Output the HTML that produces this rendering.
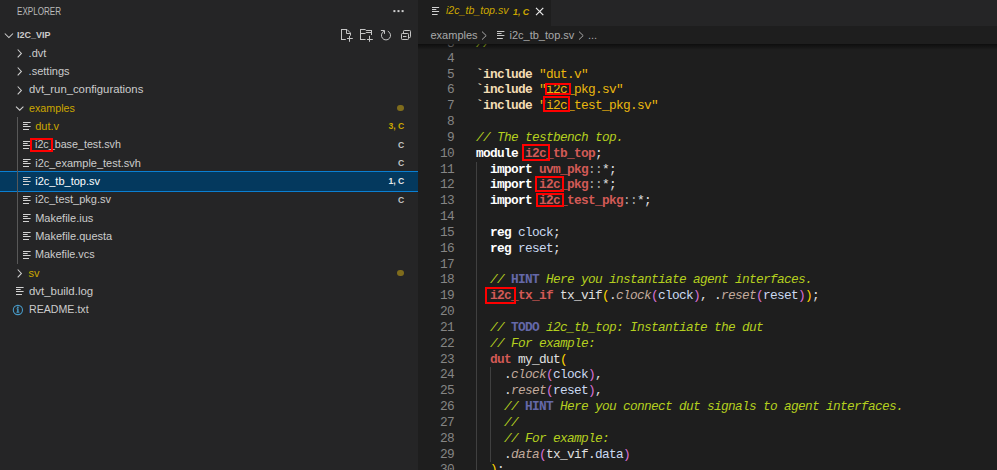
<!DOCTYPE html><html><head><meta charset="utf-8"><style>
*{margin:0;padding:0;box-sizing:border-box}
html,body{width:997px;height:470px;overflow:hidden;background:#1e1e1e}
body{position:relative;font-family:"Liberation Sans",sans-serif;-webkit-font-smoothing:subpixel-antialiased}
.a{position:absolute;white-space:pre}
.s{font-family:"Liberation Sans",sans-serif}
.m{font-family:"Liberation Mono",monospace;font-size:12.8px;letter-spacing:-0.681px;line-height:15.833px;height:15.833px}
.lab{font-size:11px;line-height:18px;color:#cccccc}
.dec{font-size:8.6px;font-weight:700;line-height:18px;color:#c5c5c5}
.ln{color:#858585;text-align:right;width:40px}
.kw{color:#ffffff;font-weight:700}
.pp{color:#f3dcb4;font-weight:700}
.str{color:#ebb80e}
.cm{color:#b4cf1e;font-style:italic}
.tg{color:#6468a8;font-weight:700;font-style:normal}
.id{color:#d25a56;font-weight:700}
.df{color:#e0e0e0}
.var{color:#cad9f2}
.po{color:#c2aa9c;font-style:italic}
.b1{color:#ffd700}
.b2{color:#da70d6}
.op{color:#a8a8a8}
.box{position:absolute;border:2.3px solid #ff0000}
</style></head><body><div class="a" style="left:0;top:0;width:418px;height:470px;background:#252526"></div>
<div class="a s" style="left:17px;top:6px;font-size:10px;line-height:12px;color:#bbbbbb;transform:scaleX(0.81);transform-origin:0 0">EXPLORER</div>
<svg class="a" style="left:388px;top:4px" width="20" height="14" viewBox="388 4 20 14"><rect x="393.4" y="10.1" width="2" height="2" fill="#d0d0d0"/><rect x="397.5" y="10.1" width="2" height="2" fill="#d0d0d0"/><rect x="401.6" y="10.1" width="2" height="2" fill="#d0d0d0"/></svg>
<svg class="a" style="left:3px;top:31px" width="12" height="9" viewBox="0 0 12 9"><path d="M1.8 2.5 L5.9 6.6 L10 2.5" fill="none" stroke="#d0d0d0" stroke-width="1.05"/></svg>
<div class="a s" style="left:17px;top:29px;font-size:9px;font-weight:700;line-height:12px;color:#cccccc;transform:scaleX(0.995);transform-origin:0 0">I2C_VIP</div>
<svg class="a" style="left:0;top:0" width="418" height="44" viewBox="0 0 418 44">
<path fill="none" stroke="#c5c5c5" stroke-width="1" d="M341.5 29 V40 M341 39.5 H345.8 M341 29.5 H347 L350.5 33 V35.6 M346.5 29.5 V33.5 H350.5"/>
<path fill="none" stroke="#c5c5c5" stroke-width="1" d="M347 38.5 H352.8 M349.5 35.8 V41.8"/>
<path fill="none" stroke="#c5c5c5" stroke-width="1" d="M360.5 29 V40 M360 29.5 H365.3 L366.1 30.5 H372 M371.5 30 V35 M360 33.5 H365.2 L366.1 32.5 H372 M360 39.5 H365.5"/>
<path fill="none" stroke="#c5c5c5" stroke-width="1" d="M367 39.5 H372.8 M369.5 35.8 V41.8"/>
<path fill="none" stroke="#c5c5c5" stroke-width="1" d="M384.2 31.2 A4.55 4.55 0 1 0 387.8 31.2"/>
<path fill="none" stroke="#c5c5c5" stroke-width="1" d="M380.9 30.5 H384.5 V33.9"/>
<path fill="none" stroke="#c5c5c5" stroke-width="1" d="M403.5 33 V31.3 Q403.5 30.5 404.3 30.5 H409.7 Q410.5 30.5 410.5 31.3 V36.7 Q410.5 37.5 409.7 37.5 H408.5"/>
<path fill="none" stroke="#c5c5c5" stroke-width="1" d="M402.3 33.5 H407.7 Q408.5 33.5 408.5 34.3 V38.7 Q408.5 39.5 407.7 39.5 H402.3 Q401.5 39.5 401.5 38.7 V34.3 Q401.5 33.5 402.3 33.5 Z"/>
<path fill="none" stroke="#c5c5c5" stroke-width="1" d="M403 36.5 H406.5"/>
</svg>
<div class="a" style="left:0;top:171px;width:418px;height:21px;background:#04395e;border-top:1px solid #0a7fd2;border-bottom:1px solid #0a7fd2"></div>
<div class="a" style="left:17px;top:117.33px;width:1px;height:146.66px;background:#585858"></div>
<svg class="a" style="left:15px;top:44.00px" width="10" height="18" viewBox="0 0 10 18"><path d="M2.7 5.5 L6.4 9.4 L2.7 13.3" fill="none" stroke="#d0d0d0" stroke-width="1.05"/></svg>
<div class="a lab" style="left:28.6px;top:44px;">.dvt</div>
<svg class="a" style="left:15px;top:62.33px" width="10" height="18" viewBox="0 0 10 18"><path d="M2.7 5.5 L6.4 9.4 L2.7 13.3" fill="none" stroke="#d0d0d0" stroke-width="1.05"/></svg>
<div class="a lab" style="left:28.6px;top:62px;">.settings</div>
<svg class="a" style="left:15px;top:80.67px" width="10" height="18" viewBox="0 0 10 18"><path d="M2.7 5.5 L6.4 9.4 L2.7 13.3" fill="none" stroke="#d0d0d0" stroke-width="1.05"/></svg>
<div class="a lab" style="left:28.6px;top:80px;transform:scaleX(1.027);transform-origin:0 0;">dvt_run_configurations</div>
<svg class="a" style="left:13.5px;top:99.00px" width="12" height="18" viewBox="0 0 12 18"><path d="M2.0 7.6 L5.7 11.2 L9.4 7.6" fill="none" stroke="#d0d0d0" stroke-width="1.05"/></svg>
<div class="a lab" style="left:28.6px;top:99px;color:#cca700;transform:scaleX(0.975);transform-origin:0 0;">examples</div>
<svg class="a" style="left:23px;top:122px" width="9" height="9" viewBox="0 0 9 9"><rect x="0" y="0" width="7.6" height="1" fill="#d2d2d2"/><rect x="0" y="2" width="4.7" height="1" fill="#d2d2d2"/><rect x="0" y="4" width="7.6" height="1" fill="#d2d2d2"/><rect x="0" y="7" width="6" height="1" fill="#d2d2d2"/></svg>
<div class="a lab" style="left:35.2px;top:117px;color:#cca700;">dut.v</div>
<svg class="a" style="left:23px;top:141px" width="9" height="9" viewBox="0 0 9 9"><rect x="0" y="0" width="7.6" height="1" fill="#d2d2d2"/><rect x="0" y="2" width="4.7" height="1" fill="#d2d2d2"/><rect x="0" y="4" width="7.6" height="1" fill="#d2d2d2"/><rect x="0" y="7" width="6" height="1" fill="#d2d2d2"/></svg>
<div class="a lab" style="left:35.2px;top:135px;transform:scaleX(0.975);transform-origin:0 0;">i2c_base_test.svh</div>
<svg class="a" style="left:23px;top:159px" width="9" height="9" viewBox="0 0 9 9"><rect x="0" y="0" width="7.6" height="1" fill="#d2d2d2"/><rect x="0" y="2" width="4.7" height="1" fill="#d2d2d2"/><rect x="0" y="4" width="7.6" height="1" fill="#d2d2d2"/><rect x="0" y="7" width="6" height="1" fill="#d2d2d2"/></svg>
<div class="a lab" style="left:35.2px;top:154px;">i2c_example_test.svh</div>
<svg class="a" style="left:23px;top:177px" width="9" height="9" viewBox="0 0 9 9"><rect x="0" y="0" width="7.6" height="1" fill="#d2d2d2"/><rect x="0" y="2" width="4.7" height="1" fill="#d2d2d2"/><rect x="0" y="4" width="7.6" height="1" fill="#d2d2d2"/><rect x="0" y="7" width="6" height="1" fill="#d2d2d2"/></svg>
<div class="a lab" style="left:35.2px;top:172px;color:#ffffff;">i2c_tb_top.sv</div>
<svg class="a" style="left:23px;top:196px" width="9" height="9" viewBox="0 0 9 9"><rect x="0" y="0" width="7.6" height="1" fill="#d2d2d2"/><rect x="0" y="2" width="4.7" height="1" fill="#d2d2d2"/><rect x="0" y="4" width="7.6" height="1" fill="#d2d2d2"/><rect x="0" y="7" width="6" height="1" fill="#d2d2d2"/></svg>
<div class="a lab" style="left:35.2px;top:190px;">i2c_test_pkg.sv</div>
<svg class="a" style="left:23px;top:214px" width="9" height="9" viewBox="0 0 9 9"><rect x="0" y="0" width="7.6" height="1" fill="#d2d2d2"/><rect x="0" y="2" width="4.7" height="1" fill="#d2d2d2"/><rect x="0" y="4" width="7.6" height="1" fill="#d2d2d2"/><rect x="0" y="7" width="6" height="1" fill="#d2d2d2"/></svg>
<div class="a lab" style="left:35.2px;top:209px;">Makefile.ius</div>
<svg class="a" style="left:23px;top:232px" width="9" height="9" viewBox="0 0 9 9"><rect x="0" y="0" width="7.6" height="1" fill="#d2d2d2"/><rect x="0" y="2" width="4.7" height="1" fill="#d2d2d2"/><rect x="0" y="4" width="7.6" height="1" fill="#d2d2d2"/><rect x="0" y="7" width="6" height="1" fill="#d2d2d2"/></svg>
<div class="a lab" style="left:35.2px;top:227px;">Makefile.questa</div>
<svg class="a" style="left:23px;top:251px" width="9" height="9" viewBox="0 0 9 9"><rect x="0" y="0" width="7.6" height="1" fill="#d2d2d2"/><rect x="0" y="2" width="4.7" height="1" fill="#d2d2d2"/><rect x="0" y="4" width="7.6" height="1" fill="#d2d2d2"/><rect x="0" y="7" width="6" height="1" fill="#d2d2d2"/></svg>
<div class="a lab" style="left:35.2px;top:245px;transform:scaleX(0.985);transform-origin:0 0;">Makefile.vcs</div>
<svg class="a" style="left:15px;top:264.00px" width="10" height="18" viewBox="0 0 10 18"><path d="M2.7 5.5 L6.4 9.4 L2.7 13.3" fill="none" stroke="#d0d0d0" stroke-width="1.05"/></svg>
<div class="a lab" style="left:28.6px;top:264px;color:#cca700;">sv</div>
<svg class="a" style="left:16px;top:287px" width="9" height="9" viewBox="0 0 9 9"><rect x="0" y="0" width="7.6" height="1" fill="#d2d2d2"/><rect x="0" y="2" width="4.7" height="1" fill="#d2d2d2"/><rect x="0" y="4" width="7.6" height="1" fill="#d2d2d2"/><rect x="0" y="7" width="6" height="1" fill="#d2d2d2"/></svg>
<div class="a lab" style="left:28.6px;top:282px;transform:scaleX(1.038);transform-origin:0 0;">dvt_build.log</div>
<svg class="a" style="left:0;top:300px" width="30" height="20" viewBox="0 300 30 20"><circle cx="17.9" cy="310" r="4.6" fill="none" stroke="#4799c6" stroke-width="1.1"/><rect x="17.05" y="306.6" width="1.6" height="1.4" fill="#4799c6"/><rect x="17.1" y="308.4" width="1.5" height="4.1" fill="#4799c6"/><rect x="16.3" y="311.7" width="3.1" height="0.9" fill="#4799c6"/><rect x="16.4" y="308.4" width="1.2" height="0.8" fill="#4799c6"/></svg>
<div class="a lab" style="left:28.6px;top:300px;transform:scaleX(0.966);transform-origin:0 0;">README.txt</div>
<div class="a" style="left:397.4px;top:105.20px;width:6.2px;height:6.2px;border-radius:50%;background:#7f6c1c"></div>
<div class="a dec" style="right:592.8px;top:117.23px;color:#cca700;">3, C</div>
<div class="a dec" style="right:592.8px;top:135.56px;">C</div>
<div class="a dec" style="right:592.8px;top:153.90px;">C</div>
<div class="a dec" style="right:592.8px;top:172.23px;color:#e8e8e8;">1, C</div>
<div class="a dec" style="right:592.8px;top:190.56px;">C</div>
<div class="a" style="left:397.4px;top:270.20px;width:6.2px;height:6.2px;border-radius:50%;background:#7f6c1c"></div>
<div class="box" style="left:30px;top:138px;width:23px;height:14px;border-width:2.2px"></div>
<div class="a" style="left:418px;top:0;width:579px;height:26px;background:#252526"></div>
<div class="a" style="left:418px;top:0;width:133px;height:26px;background:#1e1e1e"></div>
<svg class="a" style="left:432px;top:6px" width="9" height="10" viewBox="0 0 9 10"><rect x="0" y="1" width="7.1" height="1" fill="#d0d0d0"/><rect x="0" y="3" width="4.3" height="1" fill="#d0d0d0"/><rect x="0" y="5" width="7.1" height="1" fill="#d0d0d0"/><rect x="0" y="8" width="5.6" height="1" fill="#d0d0d0"/></svg>
<div class="a s" style="left:445.5px;top:4px;font-size:11px;line-height:13px;font-style:italic;color:#cca700;transform:scaleX(0.965);transform-origin:0 0">i2c_tb_top.sv</div>
<div class="a s" style="left:513px;top:5.5px;font-size:8.8px;font-weight:700;line-height:12px;font-style:italic;color:#cca700">1, C</div>
<svg class="a" style="left:535px;top:7px" width="9" height="9" viewBox="0 0 9 9"><path d="M1 0.9 L8.3 8.1 M8.3 0.9 L1 8.1" stroke="#ececec" stroke-width="1.2"/></svg>
<div class="a s" style="left:430.5px;top:29px;font-size:11px;line-height:13px;color:#a9a9a9">examples</div>
<svg class="a" style="left:480px;top:30px" width="9" height="11" viewBox="0 0 9 11"><path d="M2 1.6 L6.2 5.6 L2 9.6" fill="none" stroke="#a9a9a9" stroke-width="1"/></svg>
<svg class="a" style="left:497px;top:30px" width="9" height="10" viewBox="0 0 9 10"><rect x="0" y="1" width="7.4" height="1" fill="#c5c5c5"/><rect x="0" y="3" width="4.6" height="1" fill="#c5c5c5"/><rect x="0" y="5" width="7.4" height="1" fill="#c5c5c5"/><rect x="0" y="8" width="5.8" height="1" fill="#d0d0d0"/></svg>
<div class="a s" style="left:509.5px;top:29px;font-size:11px;line-height:13px;color:#a9a9a9">i2c_tb_top.sv</div>
<svg class="a" style="left:577px;top:30px" width="9" height="11" viewBox="0 0 9 11"><path d="M2 1.6 L6.2 5.6 L2 9.6" fill="none" stroke="#a9a9a9" stroke-width="1"/></svg>
<div class="a s" style="left:588px;top:29px;font-size:11px;line-height:13px;color:#a9a9a9">...</div>
<div class="a" style="left:0;top:0;width:997px;height:470px;clip-path:inset(44px 0 0 418px)">
<div class="a m ln" style="left:414px;top:35.64px">3</div>
<div class="a m" style="left:476px;top:35.64px"><span class="cm">//</span></div>
<div class="a m ln" style="left:414px;top:50.67px">4</div>
<div class="a m ln" style="left:414px;top:66.51px">5</div>
<div class="a m" style="left:476px;top:66.51px"><span class="pp">`include</span><span class="df"> </span><span class="str">&quot;dut.v&quot;</span></div>
<div class="a m ln" style="left:414px;top:82.34px">6</div>
<div class="a m" style="left:476px;top:82.34px"><span class="pp">`include</span><span class="df"> </span><span class="str">&quot;i2c_pkg.sv&quot;</span></div>
<div class="a m ln" style="left:414px;top:98.17px">7</div>
<div class="a m" style="left:476px;top:98.17px"><span class="pp">`include</span><span class="df"> </span><span class="str">&quot;i2c_test_pkg.sv&quot;</span></div>
<div class="a m ln" style="left:414px;top:114.00px">8</div>
<div class="a m ln" style="left:414px;top:129.84px">9</div>
<div class="a m" style="left:476px;top:129.84px"><span class="cm">// The testbench top.</span></div>
<div class="a m ln" style="left:414px;top:145.67px">10</div>
<div class="a m" style="left:476px;top:145.67px"><span class="kw">module</span><span class="df"> </span><span class="id">i2c_tb_top</span><span class="df">;</span></div>
<div class="a m ln" style="left:414px;top:161.50px">11</div>
<div class="a m" style="left:476px;top:161.50px"><span class="df">  </span><span class="kw">import</span><span class="df"> </span><span class="id">uvm_pkg</span><span class="op">::</span><span class="df">*;</span></div>
<div class="a m ln" style="left:414px;top:177.34px">12</div>
<div class="a m" style="left:476px;top:177.34px"><span class="df">  </span><span class="kw">import</span><span class="df"> </span><span class="id">i2c_pkg</span><span class="op">::</span><span class="df">*;</span></div>
<div class="a m ln" style="left:414px;top:193.17px">13</div>
<div class="a m" style="left:476px;top:193.17px"><span class="df">  </span><span class="kw">import</span><span class="df"> </span><span class="id">i2c_test_pkg</span><span class="op">::</span><span class="df">*;</span></div>
<div class="a m ln" style="left:414px;top:209.00px">14</div>
<div class="a m ln" style="left:414px;top:224.84px">15</div>
<div class="a m" style="left:476px;top:224.84px"><span class="df">  </span><span class="kw">reg</span><span class="df"> </span><span class="var">clock</span><span class="df">;</span></div>
<div class="a m ln" style="left:414px;top:240.67px">16</div>
<div class="a m" style="left:476px;top:240.67px"><span class="df">  </span><span class="kw">reg</span><span class="df"> </span><span class="var">reset</span><span class="df">;</span></div>
<div class="a m ln" style="left:414px;top:256.50px">17</div>
<div class="a m ln" style="left:414px;top:272.33px">18</div>
<div class="a m" style="left:476px;top:272.33px"><span class="df">  </span><span class="cm">// </span><span class="tg">HINT</span><span class="cm"> Here you instantiate agent interfaces.</span></div>
<div class="a m ln" style="left:414px;top:288.17px">19</div>
<div class="a m" style="left:476px;top:288.17px"><span class="df">  </span><span class="id">i2c_tx_if</span><span class="df"> tx_vif</span><span class="b1">(</span><span class="df">.</span><span class="po">clock</span><span class="b2">(</span><span class="var">clock</span><span class="b2">)</span><span class="df">, .</span><span class="po">reset</span><span class="b2">(</span><span class="var">reset</span><span class="b2">)</span><span class="b1">)</span><span class="df">;</span></div>
<div class="a m ln" style="left:414px;top:304.00px">20</div>
<div class="a m ln" style="left:414px;top:319.83px">21</div>
<div class="a m" style="left:476px;top:319.83px"><span class="df">  </span><span class="cm">// </span><span class="tg">TODO</span><span class="cm"> i2c_tb_top: Instantiate the dut</span></div>
<div class="a m ln" style="left:414px;top:335.67px">22</div>
<div class="a m" style="left:476px;top:335.67px"><span class="df">  </span><span class="cm">// For example:</span></div>
<div class="a m ln" style="left:414px;top:351.50px">23</div>
<div class="a m" style="left:476px;top:351.50px"><span class="df">  </span><span class="id">dut</span><span class="df"> my_dut</span><span class="b1">(</span></div>
<div class="a m ln" style="left:414px;top:367.33px">24</div>
<div class="a m" style="left:476px;top:367.33px"><span class="df">    .</span><span class="po">clock</span><span class="b2">(</span><span class="var">clock</span><span class="b2">)</span><span class="df">,</span></div>
<div class="a m ln" style="left:414px;top:383.17px">25</div>
<div class="a m" style="left:476px;top:383.17px"><span class="df">    .</span><span class="po">reset</span><span class="b2">(</span><span class="var">reset</span><span class="b2">)</span><span class="df">,</span></div>
<div class="a m ln" style="left:414px;top:399.00px">26</div>
<div class="a m" style="left:476px;top:399.00px"><span class="df">    </span><span class="cm">// </span><span class="tg">HINT</span><span class="cm"> Here you connect dut signals to agent interfaces.</span></div>
<div class="a m ln" style="left:414px;top:414.83px">27</div>
<div class="a m" style="left:476px;top:414.83px"><span class="df">    </span><span class="cm">//</span></div>
<div class="a m ln" style="left:414px;top:430.66px">28</div>
<div class="a m" style="left:476px;top:430.66px"><span class="df">    </span><span class="cm">// For example:</span></div>
<div class="a m ln" style="left:414px;top:446.50px">29</div>
<div class="a m" style="left:476px;top:446.50px"><span class="df">    .</span><span class="po">data</span><span class="b2">(</span><span class="df">tx_vif.</span><span class="var">data</span><span class="b2">)</span></div>
<div class="a m ln" style="left:414px;top:462.33px">30</div>
<div class="a m" style="left:476px;top:462.33px"><span class="df">  </span><span class="b1">)</span><span class="df">;</span></div>
<div class="a" style="left:476px;top:161.50px;width:1px;height:316.66px;background:#404040"></div>
<div class="a" style="left:490px;top:367.33px;width:1px;height:95.00px;background:#404040"></div>
<div class="box" style="left:545px;top:83px;width:26px;height:12px"></div>
<div class="box" style="left:543px;top:96.4px;width:27px;height:15.3px"></div>
<div class="box" style="left:522px;top:144px;width:28px;height:17px"></div>
<div class="box" style="left:535px;top:176px;width:29px;height:16px"></div>
<div class="box" style="left:536px;top:192.8px;width:28.3px;height:14.3px"></div>
<div class="box" style="left:485px;top:287px;width:31.2px;height:17.1px"></div>
</div>
<div class="a" style="left:418px;top:44px;width:579px;height:6px;background:linear-gradient(rgba(0,0,0,0.55),rgba(0,0,0,0))"></div></body></html>
